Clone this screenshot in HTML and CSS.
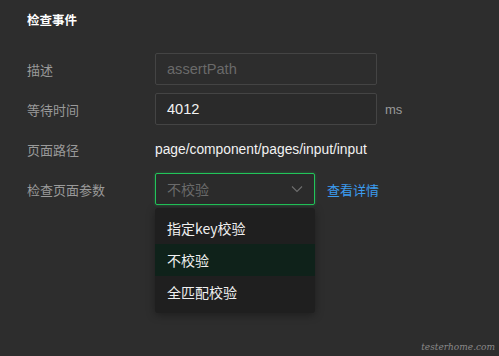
FILE: index.html
```html
<!DOCTYPE html>
<html>
<head>
<meta charset="utf-8">
<link rel="stylesheet" href="styles.css">
</head>
<body>
<div class="panel">
  <div class="title">检查事件</div>
  <div class="form">
    <div class="row">
      <div class="label">描述</div>
      <div class="input placeholder">assertPath</div>
    </div>
    <div class="row">
      <div class="label">等待时间</div>
      <div class="input">4012</div>
      <div class="unit">ms</div>
    </div>
    <div class="row">
      <div class="label">页面路径</div>
      <div class="value">page/component/pages/input/input</div>
    </div>
    <div class="row">
      <div class="label">检查页面参数</div>
      <div class="select-wrap">
        <div class="select">
          <span class="select-text">不校验</span>
          <svg class="arrow" width="12" height="8" viewBox="0 0 12 8"><path d="M1 1.5 L6 6.5 L11 1.5" fill="none" stroke="#6e6e6e" stroke-width="1.1"/></svg>
        </div>
        <ul class="menu">
          <li>指定key校验</li>
          <li class="active">不校验</li>
          <li>全匹配校验</li>
        </ul>
      </div>
      <a class="link">查看详情</a>
    </div>
  </div>
  <div class="watermark">testerhome.com</div>
</div>
</body>
</html>
```
FILE: styles.css
```css
html, body {
  margin: 0;
  padding: 0;
  background: #2d2d2d;
}
body {
  width: 499px;
  height: 356px;
  overflow: hidden;
  font-family: "Noto Sans CJK SC", "Noto Sans", "Liberation Sans", sans-serif;
  font-size: 13px;
}
.panel {
  position: relative;
  height: 356px;
  padding: 0 0 0 27px;
  box-sizing: border-box;
}
.title {
  padding-top: 10px;
  height: 53px;
  box-sizing: border-box;
  color: #ffffff;
  font-weight: bold;
  font-size: 12.5px;
  line-height: 20px;
}
.form {
  display: flex;
  flex-direction: column;
  gap: 8px;
}
.row {
  display: flex;
  align-items: center;
  height: 32px;
}
.label {
  width: 128px;
  color: #9a9a9a;
  font-size: 13px;
}
.input {
  width: 222px;
  height: 32px;
  box-sizing: border-box;
  border: 1px solid #444444;
  border-radius: 2px;
  background: #2a2a2a;
  color: #f2f2f2;
  padding-left: 11px;
  line-height: 30px;
  font-size: 14.6px;
  font-family: "Liberation Sans", "Noto Sans CJK SC", sans-serif;
}
.input.placeholder {
  color: #6a6a6a;
  background: #2d2d2d;
}
.unit {
  margin-left: 8px;
  color: #9a9a9a;
  font-family: "Liberation Sans", sans-serif;
  font-size: 13px;
}
.value {
  color: #f2f2f2;
  font-family: "Liberation Sans", sans-serif;
  font-size: 13.8px;
}
.select-wrap {
  position: relative;
  width: 160px;
}
.select {
  height: 32px;
  box-sizing: border-box;
  border: 1px solid #22c55a;
  border-radius: 2px;
  box-shadow: 0 0 3px rgba(34, 197, 90, 0.4);
  display: flex;
  align-items: center;
  justify-content: space-between;
  padding: 0 11px 0 11px;
  background: #2b2b2b;
}
.select-text {
  color: #6a6a6a;
  font-size: 14px;
}
.arrow {
  display: block;
}
.menu {
  position: absolute;
  top: 35px;
  left: 0;
  width: 160px;
  margin: 0;
  padding: 4px 0 5px;
  list-style: none;
  background: #1f1f1f;
  border-radius: 3px;
  box-shadow: 0 2px 8px rgba(0, 0, 0, 0.35);
}
.menu li {
  height: 32px;
  line-height: 32px;
  padding-left: 12px;
  color: #f0f0f0;
  font-size: 14px;
}
.menu li.active {
  background: #0f221a;
}
.link {
  margin-left: 12px;
  color: #3b9cf0;
  font-size: 13px;
}
.watermark {
  position: absolute;
  right: 4px;
  bottom: 4px;
  color: #8a8a8a;
  font-family: "DejaVu Serif", serif;
  font-style: italic;
  font-size: 9px;
}
```
